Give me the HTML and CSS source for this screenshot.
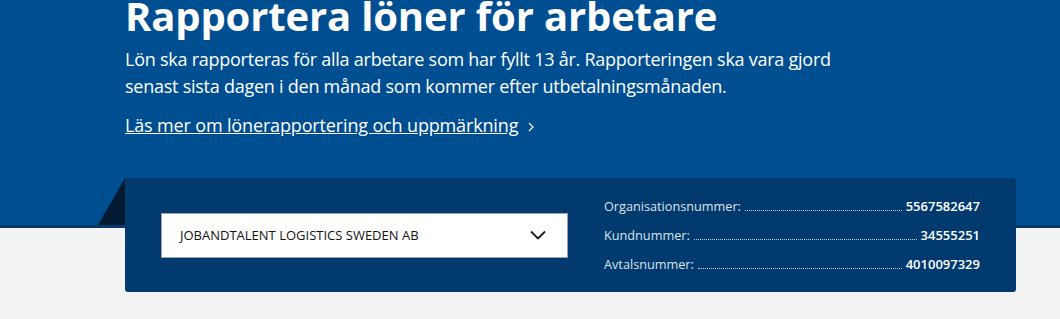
FILE: index.html
```html
<!DOCTYPE html>
<html lang="sv">
<head>
    <meta charset="UTF-8">
    <meta name="viewport" content="width=device-width, initial-scale=1.0">
    <title>Rapportera löner för arbetare</title>
    <link rel="stylesheet" href="styles.css">
</head>
<body>
    <header class="hero">
        <div class="hero-inner">
            <h1>Rapportera löner för arbetare</h1>
            <p>Lön ska rapporteras för alla arbetare som har fyllt 13 år. Rapporteringen ska vara gjord senast sista dagen i den månad som kommer efter utbetalningsmånaden.</p>
            <a href="#" class="read-more">Läs mer om lönerapportering och uppmärkning</a>
            <svg class="read-more-arrow" width="6" height="10" viewBox="0 0 6 10">
                <polyline points="1,1 5,5 1,9" fill="none" stroke="#fff" stroke-width="1.2"/>
            </svg>
        </div>
    </header>

    <section class="company-card">
        <div class="company-select">
            <span>JOBANDTALENT LOGISTICS SWEDEN AB</span>
            <svg width="16" height="10" viewBox="0 0 16 10">
                <polyline points="1,1.5 8,8.5 15,1.5" fill="none" stroke="#1a1a1a" stroke-width="1.8"/>
            </svg>
        </div>

        <dl class="company-info">
            <div class="info-row">
                <dt>Organisationsnummer:</dt>
                <span class="leader"></span>
                <dd>5567582647</dd>
            </div>
            <div class="info-row">
                <dt>Kundnummer:</dt>
                <span class="leader"></span>
                <dd>34555251</dd>
            </div>
            <div class="info-row">
                <dt>Avtalsnummer:</dt>
                <span class="leader"></span>
                <dd>4010097329</dd>
            </div>
        </dl>
    </section>
</body>
</html>
```

FILE: styles.css
```css
body {
    font-family: 'Open Sans', 'Noto Sans', sans-serif;
    margin: 0;
    background-color: #f3f3f3;
    color: #fff;
}
.hero {
    display: flow-root;
    background-color: #004e92;
    border-bottom: 3px solid #07396a;
    height: 225px;
}
.hero-inner {
    padding-left: 125px;
    width: 720px;
}
h1 {
    font-size: 40px;
    font-weight: 700;
    line-height: 1;
    margin: -4px 0 0;
    letter-spacing: -0.15px;
}
.hero p {
    font-size: 18px;
    line-height: 27px;
    margin: 10px 0 0;
    letter-spacing: -0.25px;
}
.read-more {
    display: inline-block;
    margin-top: 13px;
    font-size: 18px;
    color: #fff;
    letter-spacing: -0.15px;
}
.read-more-arrow {
    margin-left: 6px;
}
.company-card {
    position: relative;
    display: flex;
    align-items: center;
    justify-content: space-between;
    margin: -50px 0 0 125px;
    width: 891px;
    height: 114px;
    box-sizing: border-box;
    padding: 0 36px;
    background-color: #003a6e;
    border-radius: 0 3px 3px 3px;
}
.company-card::before {
    content: "";
    position: absolute;
    left: -27px;
    top: 0;
    border-left: 27px solid transparent;
    border-bottom: 47px solid #021b33;
}
.company-select {
    display: flex;
    align-items: center;
    justify-content: space-between;
    width: 407px;
    height: 45px;
    box-sizing: border-box;
    padding: 0 21px 0 18px;
    background-color: #fff;
    border: 1px solid #9aa3ad;
    color: #111;
    font-size: 13px;
}
.company-info {
    width: 376px;
    margin: 0;
    font-size: 12.7px;
}
.info-row {
    display: flex;
    align-items: baseline;
    height: 29px;
    line-height: 29px;
}
.info-row dt {
    color: #dde3ea;
}
.leader {
    flex: 1;
    margin: 0 4px;
    border-bottom: 1px dotted #c8d0da;
}
.info-row dd {
    margin: 0;
    font-size: 13px;
    font-weight: 600;
}
```
